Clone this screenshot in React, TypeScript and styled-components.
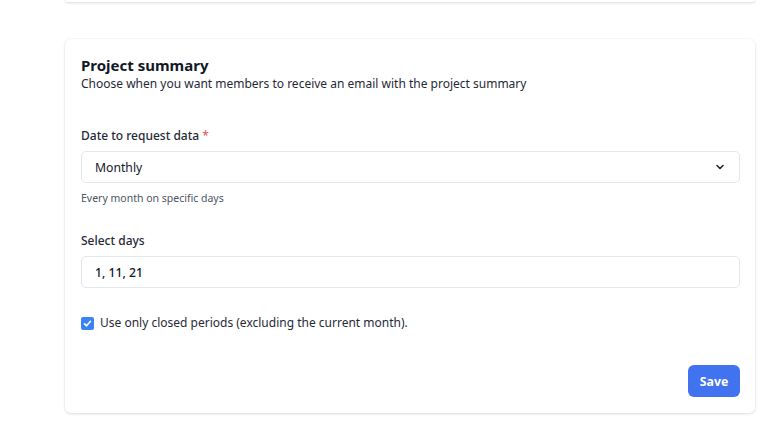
import React, { useState } from "react"
import styled, { createGlobalStyle } from "styled-components"

const GlobalStyle = createGlobalStyle`
  html, body {
    margin: 0;
    padding: 0;
    background: #ffffff;
  }
  body {
    font-family: "Noto Sans", "Open Sans", sans-serif;
    color: #1f2937;
  }
`

const Page = styled.div`
  width: 781px;
  height: 432px;
  overflow: hidden;
  padding-left: 65px;
  box-sizing: border-box;
`

const Column = styled.div`
  width: 690px;
  display: flex;
  flex-direction: column;
  gap: 37px;
`

const PrevCard = styled.div`
  height: 2px;
  background: #ffffff;
  border-radius: 0 0 6px 6px;
  box-shadow: 0 1px 3px rgba(0, 0, 0, 0.14), 0 0 0 1px rgba(0, 0, 0, 0.03);
`

const Card = styled.section`
  background: #ffffff;
  border-radius: 6px;
  box-shadow: 0 1px 3px rgba(0, 0, 0, 0.12), 0 0 0 1px rgba(0, 0, 0, 0.02);
  padding: 16px 15px 16px 16px;
  display: flex;
  flex-direction: column;
`

const Title = styled.h2`
  margin: 0;
  font-size: 15px;
  line-height: 20px;
  font-weight: 700;
  color: #111827;
`

const Subtitle = styled.p`
  margin: 0;
  font-size: 12px;
  line-height: 18px;
  color: #1f2937;
`

const Field = styled.div<{ $top: number }>`
  margin-top: ${(p) => p.$top}px;
  display: flex;
  flex-direction: column;
`

const Label = styled.label`
  font-size: 12px;
  line-height: 16px;
  font-weight: 500;
  color: #1f2937;
  margin-bottom: 7px;
`

const Required = styled.span`
  color: #e0605f;
  margin-left: 3px;
`

const Box = styled.div`
  height: 32px;
  box-sizing: border-box;
  border: 1px solid #e2e7ef;
  border-radius: 5px;
  padding: 0 14px 0 13px;
  display: flex;
  align-items: center;
  justify-content: space-between;
  font-size: 12.2px;
  color: #111827;
`

const Value = styled.span<{ $bold?: boolean }>`
  font-weight: ${(p) => (p.$bold ? 500 : 400)};
`

const Help = styled.div`
  margin-top: 8px;
  font-size: 10.5px;
  line-height: 14px;
  color: #4b5563;
`

const CheckRow = styled.label`
  margin-top: 27px;
  display: flex;
  align-items: center;
  gap: 6px;
  font-size: 12px;
  line-height: 16px;
  color: #1f2937;
`

const CheckBox = styled.span`
  width: 13px;
  height: 13px;
  border-radius: 2px;
  background: #3b82f6;
  display: flex;
  align-items: center;
  justify-content: center;
`

const Footer = styled.div`
  margin-top: 34px;
  display: flex;
  justify-content: flex-end;
`

const SaveButton = styled.button`
  width: 52px;
  height: 32px;
  border: none;
  border-radius: 6px;
  background: #4172f0;
  color: #ffffff;
  font-family: inherit;
  font-size: 12.3px;
  font-weight: 700;
  cursor: pointer;
`

const Chevron = () => (
  <svg width="10" height="10" viewBox="0 0 10 10">
    <path d="M2 3.5 L5 6.5 L8 3.5" fill="none" stroke="#1f2937" strokeWidth="1.6" strokeLinecap="round" strokeLinejoin="round" />
  </svg>
)

const Tick = () => (
  <svg width="11" height="11" viewBox="0 0 11 11">
    <path d="M2.5 5.8 L4.6 7.8 L8.5 3.3" fill="none" stroke="#ffffff" strokeWidth="1.6" strokeLinecap="round" strokeLinejoin="round" />
  </svg>
)

export default function App() {
  const [closed, setClosed] = useState(true)

  return (
    <Page>
      <GlobalStyle />
      <Column>
        <PrevCard />
        <Card>
          <Title>Project summary</Title>
          <Subtitle>Choose when you want members to receive an email with the project summary</Subtitle>

          <Field $top={35}>
            <Label>
              Date to request data<Required>*</Required>
            </Label>
            <Box>
              <Value>Monthly</Value>
              <Chevron />
            </Box>
            <Help>Every month on specific days</Help>
          </Field>

          <Field $top={28}>
            <Label>Select days</Label>
            <Box>
              <Value $bold>1, 11, 21</Value>
            </Box>
          </Field>

          <CheckRow onClick={() => setClosed(!closed)}>
            <CheckBox>{closed && <Tick />}</CheckBox>
            Use only closed periods (excluding the current month).
          </CheckRow>

          <Footer>
            <SaveButton>Save</SaveButton>
          </Footer>
        </Card>
      </Column>
    </Page>
  )
}
